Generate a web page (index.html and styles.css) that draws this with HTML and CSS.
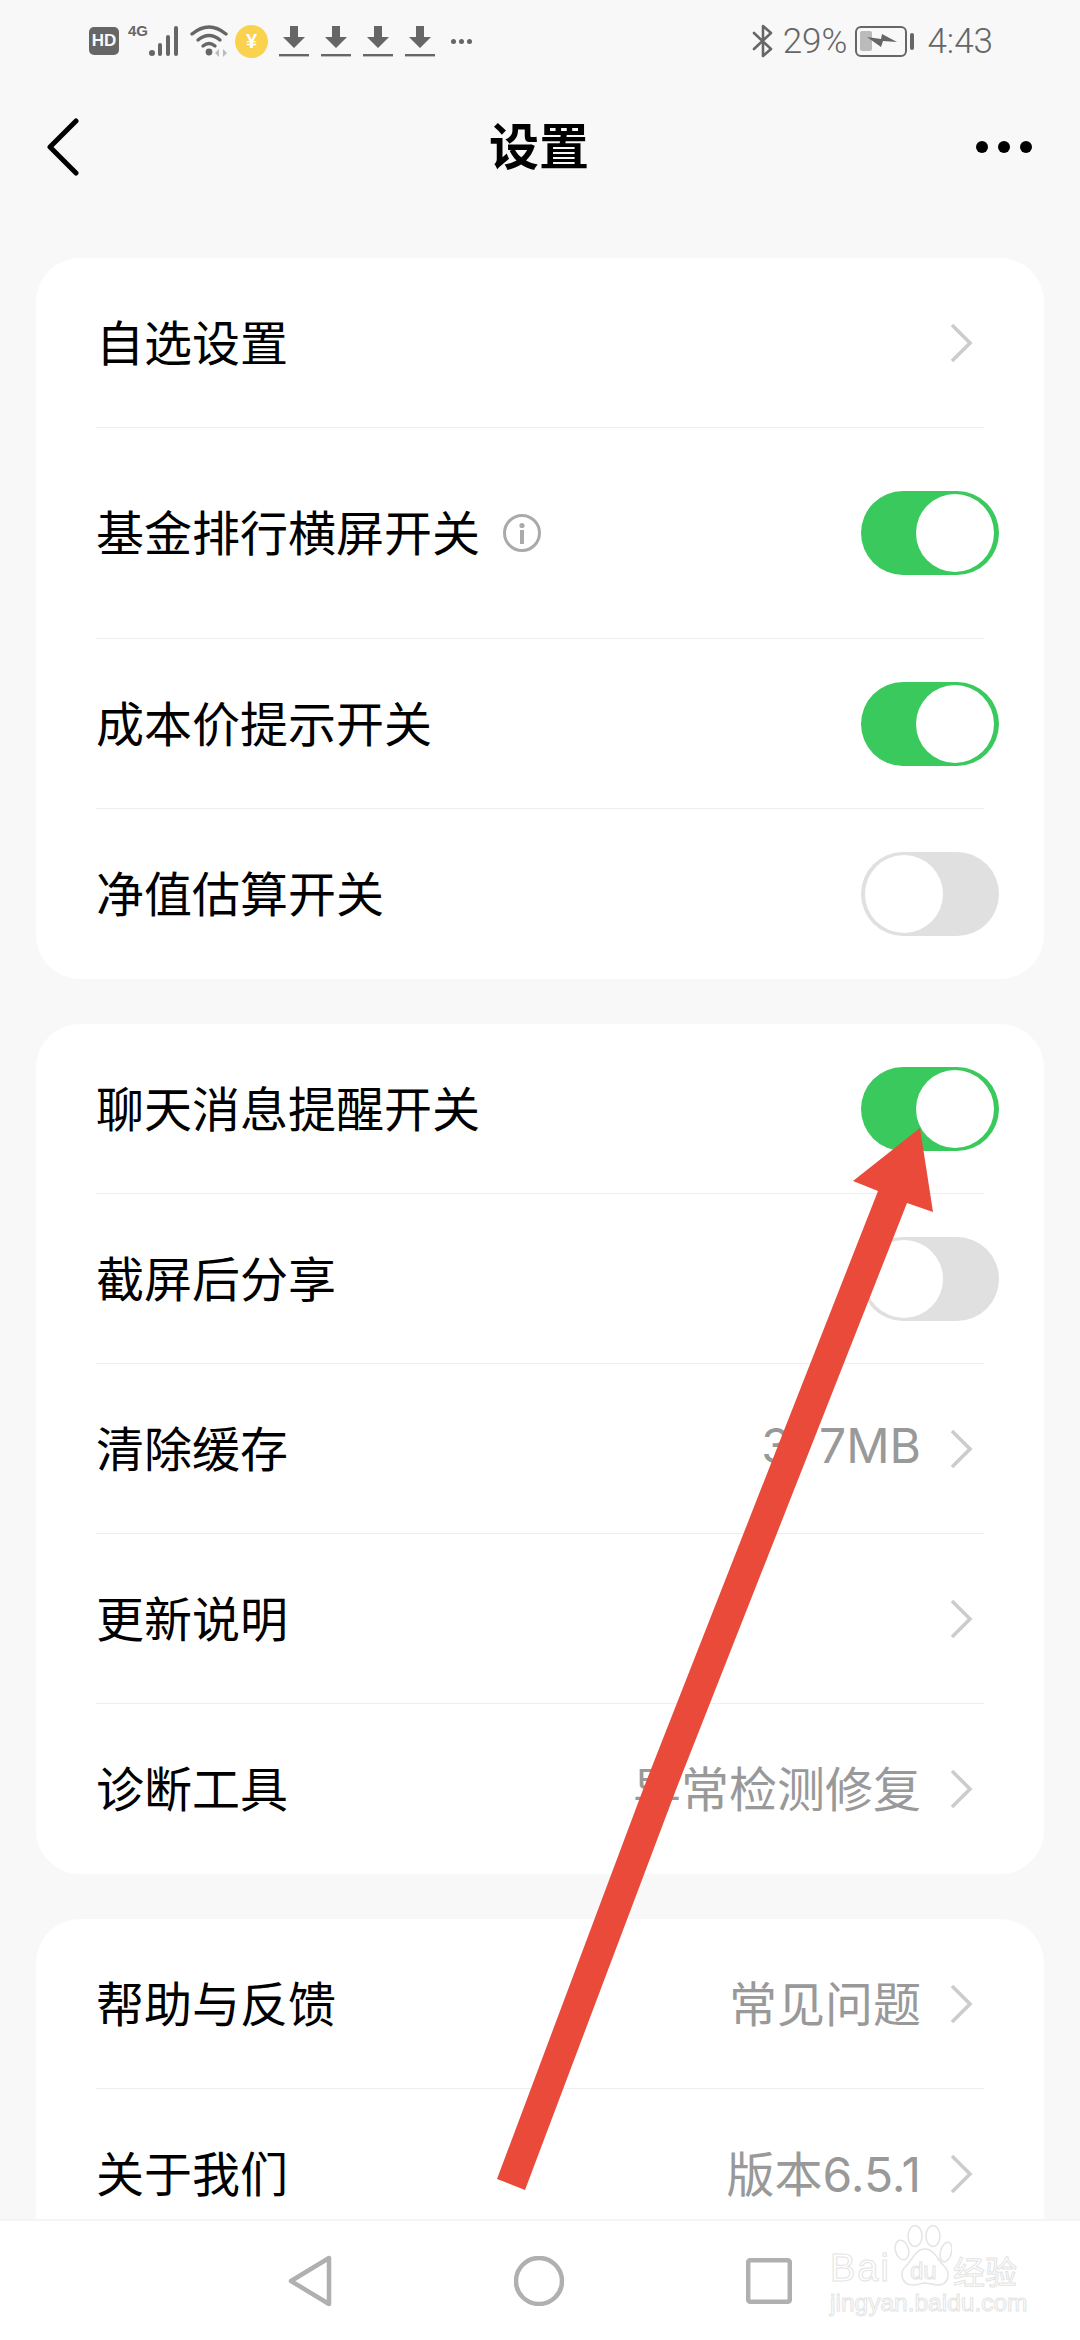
FILE: index.html
```html
<!DOCTYPE html>
<html lang="zh-CN">
<head>
    <meta charset="UTF-8">
    <meta name="viewport" content="width=device-width, initial-scale=1.0">
    <title>设置</title>
    <link rel="stylesheet" href="styles.css">
</head>
<body>
    <div id="phone">
        <div class="status">
            <div class="hd">HD</div>
            <div class="net">
                <span class="net-label">4G</span>
                <svg width="32" height="32" viewBox="0 0 32 32"><g fill="#666"><circle cx="4" cy="28" r="3"/><rect x="10" y="18" width="4" height="13" rx="2"/><rect x="18" y="10" width="4" height="21" rx="2"/><rect x="26" y="1" width="4" height="30" rx="2"/></g></svg>
            </div>
            <svg class="wifi" width="40" height="34" viewBox="0 0 40 34"><g fill="none" stroke="#666" stroke-width="3.4" stroke-linecap="round"><path d="M2 10 Q19 -4 36 10"/><path d="M8 16 Q19 7 30 16"/><path d="M13 22 Q19 17 25 22"/></g><circle cx="19" cy="28" r="3.4" fill="#666"/><path d="M29 25v8l-4-4zM33 25v8l4-4z" fill="#bbb"/></svg>
            <div class="coin">¥</div>
            <div class="downloads">
                <svg width="30" height="32" viewBox="0 0 30 32"><path d="M11 1h8v11h7L15 23 4 12h7z" fill="#666"/><rect y="29" width="30" height="2.4" fill="#666"/></svg>
                <svg width="30" height="32" viewBox="0 0 30 32"><path d="M11 1h8v11h7L15 23 4 12h7z" fill="#666"/><rect y="29" width="30" height="2.4" fill="#666"/></svg>
                <svg width="30" height="32" viewBox="0 0 30 32"><path d="M11 1h8v11h7L15 23 4 12h7z" fill="#666"/><rect y="29" width="30" height="2.4" fill="#666"/></svg>
                <svg width="30" height="32" viewBox="0 0 30 32"><path d="M11 1h8v11h7L15 23 4 12h7z" fill="#666"/><rect y="29" width="30" height="2.4" fill="#666"/></svg>
            </div>
            <div class="more-small"><i></i><i></i><i></i></div>
            <div class="status-right">
                <svg width="22" height="34" viewBox="0 0 22 34"><path d="M2 9l17 16-8 7V2l8 7L2 25" fill="none" stroke="#666" stroke-width="2.6" stroke-linejoin="round" stroke-linecap="round"/></svg>
                <span class="pct">29%</span>
                <div class="battery">
                    <div class="battery-fill"></div>
                    <svg class="bolt" width="30" height="14" viewBox="0 0 30 14"><path d="M0 3l14 2 1-5 15 8-14-1-2 6z" fill="#666"/></svg>
                </div>
                <div class="battery-nub"></div>
                <span class="clock">4:43</span>
            </div>
        </div>

        <div class="topbar">
            <svg class="back" width="34" height="58" viewBox="0 0 34 58"><path d="M30 3L4 29l26 26" fill="none" stroke="#000" stroke-width="5" stroke-linecap="round" stroke-linejoin="round"/></svg>
            <h1 class="title">设置</h1>
            <div class="more"><i></i><i></i><i></i></div>
        </div>

        <div class="content">
            <div class="card">
                <div class="row">
                    <span class="label">自选设置</span>
                    <svg class="chev" width="24" height="40" viewBox="0 0 24 40"><path d="M3 2l18 18L3 38" fill="none" stroke="#ccc" stroke-width="3.6"/></svg>
                </div>
                <div class="row row-tall">
                    <span class="label">基金排行横屏开关</span>
                    <svg class="info" width="40" height="40" viewBox="0 0 40 40"><circle cx="20" cy="20" r="17.5" fill="none" stroke="#aaa" stroke-width="3"/><circle cx="20" cy="12.5" r="2.6" fill="#aaa"/><rect x="18" y="17" width="4" height="14" fill="#aaa"/></svg>
                    <div class="toggle on"><div class="knob"></div></div>
                </div>
                <div class="row">
                    <span class="label">成本价提示开关</span>
                    <div class="toggle on"><div class="knob"></div></div>
                </div>
                <div class="row last">
                    <span class="label">净值估算开关</span>
                    <div class="toggle"><div class="knob"></div></div>
                </div>
            </div>

            <div class="card">
                <div class="row">
                    <span class="label">聊天消息提醒开关</span>
                    <div class="toggle on"><div class="knob"></div></div>
                </div>
                <div class="row">
                    <span class="label">截屏后分享</span>
                    <div class="toggle"><div class="knob"></div></div>
                </div>
                <div class="row">
                    <span class="label">清除缓存</span>
                    <span class="value">377MB</span>
                    <svg class="chev" width="24" height="40" viewBox="0 0 24 40"><path d="M3 2l18 18L3 38" fill="none" stroke="#ccc" stroke-width="3.6"/></svg>
                </div>
                <div class="row">
                    <span class="label">更新说明</span>
                    <svg class="chev" width="24" height="40" viewBox="0 0 24 40"><path d="M3 2l18 18L3 38" fill="none" stroke="#ccc" stroke-width="3.6"/></svg>
                </div>
                <div class="row last">
                    <span class="label">诊断工具</span>
                    <span class="value">异常检测修复</span>
                    <svg class="chev" width="24" height="40" viewBox="0 0 24 40"><path d="M3 2l18 18L3 38" fill="none" stroke="#ccc" stroke-width="3.6"/></svg>
                </div>
            </div>

            <div class="card">
                <div class="row">
                    <span class="label">帮助与反馈</span>
                    <span class="value">常见问题</span>
                    <svg class="chev" width="24" height="40" viewBox="0 0 24 40"><path d="M3 2l18 18L3 38" fill="none" stroke="#ccc" stroke-width="3.6"/></svg>
                </div>
                <div class="row last">
                    <span class="label">关于我们</span>
                    <span class="value">版本6.5.1</span>
                    <svg class="chev" width="24" height="40" viewBox="0 0 24 40"><path d="M3 2l18 18L3 38" fill="none" stroke="#ccc" stroke-width="3.6"/></svg>
                </div>
            </div>
        </div>

        <div class="navbar">
            <svg width="44" height="52" viewBox="0 0 44 52"><path d="M41 3v46L3 26z" fill="none" stroke="#b0b0b0" stroke-width="4.5" stroke-linejoin="round"/></svg>
            <svg width="50" height="50" viewBox="0 0 50 50"><circle cx="25" cy="25" r="23" fill="none" stroke="#b0b0b0" stroke-width="4.5"/></svg>
            <svg width="46" height="46" viewBox="0 0 46 46"><rect x="2.2" y="2.2" width="41.6" height="41.6" rx="2" fill="none" stroke="#b0b0b0" stroke-width="4.5"/></svg>
        </div>

        <!-- red annotation arrow, drawn over the page -->
        <svg class="arrow" width="1080" height="2340" viewBox="0 0 1080 2340">
            <path d="M920 1128L853 1181L878 1191L644 1787L497 2179L525 2190L677 1787L907 1203L933 1212Z" fill="#e94a3a"/>
        </svg>

        <div class="watermark">
            <div class="wm-top">
                <span class="wm-bai">Bai</span>
                <div class="wm-paw">
                    <svg width="58" height="62" viewBox="0 0 58 62"><g fill="#fff" stroke="#e4e4e4" stroke-width="1.5"><ellipse cx="8" cy="25" rx="6.5" ry="10" transform="rotate(-15 8 25)"/><ellipse cx="21" cy="11" rx="7" ry="10.5"/><ellipse cx="39" cy="11" rx="7" ry="10.5"/><ellipse cx="52" cy="27" rx="5.5" ry="10" transform="rotate(15 52 27)"/><path d="M31 24C21 24 18 36 12 41C5 47 7 60 19 60C25 60 27 58 31 58C35 58 38 60 44 60C55 60 57 47 50 41C44 36 41 24 31 24Z"/></g></svg>
                    <span class="wm-du">du</span>
                </div>
                <span class="wm-jy">经验</span>
            </div>
            <div class="wm-url">jingyan.baidu.com</div>
        </div>
    </div>
</body>
</html>
```

FILE: styles.css
```css
body {
    margin: 0;
    padding: 0;
    background-color: #f8f8f8;
    font-family: "Noto Sans CJK SC", sans-serif;
}

#phone {
    position: relative;
    width: 1080px;
    height: 2340px;
    display: flex;
    flex-direction: column;
    overflow: hidden;
}

/* status bar */
.status {
    height: 56px;
    padding: 26px 87px 0 89px;
    box-sizing: border-box;
    display: flex;
    align-items: center;
    flex-shrink: 0;
    color: #666;
}

.hd {
    width: 30px;
    height: 28px;
    border-radius: 5px;
    background-color: #666;
    color: #f8f8f8;
    font: bold 17px "Liberation Sans", sans-serif;
    text-align: center;
    line-height: 28px;
}

.net {
    display: flex;
    align-items: flex-end;
    margin-left: 9px;
    height: 32px;
}

.net-label {
    font: bold 15px "Liberation Sans", sans-serif;
    align-self: flex-start;
    margin-top: -3px;
}

.wifi {
    margin-left: 10px;
}

.coin {
    width: 33px;
    height: 33px;
    border-radius: 50%;
    background-color: #fbd24e;
    color: #fff;
    font: bold 20px "Liberation Sans", sans-serif;
    text-align: center;
    line-height: 33px;
    margin-left: 5px;
}

.downloads {
    display: flex;
    gap: 12px;
    margin-left: 11px;
}

.more-small {
    display: flex;
    gap: 3px;
    margin-left: 16px;
}

.more-small i {
    width: 5px;
    height: 5px;
    border-radius: 50%;
    background-color: #666;
}

.status-right {
    display: flex;
    align-items: center;
    margin-left: auto;
    font-family: Roboto, sans-serif;
    font-weight: 300;
    font-size: 35px;
}

.pct {
    margin-left: 9px;
}

.battery {
    position: relative;
    width: 52px;
    height: 31px;
    box-sizing: border-box;
    border: 2.5px solid #666;
    border-radius: 6px;
    margin-left: 8px;
}

.battery-fill {
    width: 12px;
    height: 20px;
    margin: 3px;
    border-radius: 2px;
    background-color: #bbb;
}

.bolt {
    position: absolute;
    left: 10px;
    top: 6px;
}

.battery-nub {
    width: 4px;
    height: 17px;
    border-radius: 2px;
    background-color: #666;
    margin-left: 3px;
}

.clock {
    margin-left: 13px;
}

/* title row */
.topbar {
    height: 182px;
    padding: 0 48px 0 46px;
    display: grid;
    grid-template-columns: 1fr auto 1fr;
    align-items: center;
    flex-shrink: 0;
}

.title {
    margin: 0;
    padding-bottom: 8px;
    font-size: 50px;
    font-weight: bold;
    color: #000;
}

.more {
    display: flex;
    gap: 10px;
    justify-content: flex-end;
}

.more i {
    width: 12px;
    height: 12px;
    border-radius: 50%;
    background-color: #000;
}

/* cards */
.content {
    flex: 1;
    min-height: 0;
    overflow: hidden;
    padding: 20px 36px 0;
}

.card {
    background-color: #fff;
    border-radius: 44px;
    padding: 0 60px;
    margin-bottom: 45px;
}

.row {
    height: 170px;
    box-sizing: border-box;
    display: flex;
    align-items: center;
    border-bottom: 1px solid #eee;
}

.row-tall {
    height: 211px;
}

.last {
    border-bottom: none;
}

.label {
    font-size: 48px;
    color: #000;
    margin-right: auto;
    padding-bottom: 6px;
}

.row-tall .label {
    margin-right: 22px;
}

.info {
    margin-right: auto;
}

.value {
    font-family: Inter, "Noto Sans CJK SC", sans-serif;
    font-size: 48px;
    color: #999;
    margin-right: 28px;
    padding-bottom: 6px;
}

.chev {
    margin-right: 11px;
}

.toggle {
    width: 138px;
    height: 84px;
    margin-right: -15px;
    padding: 3px 0 3px 4px;
    box-sizing: border-box;
    border-radius: 42px;
    background-color: #e0e0e0;
}

.knob {
    width: 78px;
    height: 78px;
    border-radius: 50%;
    background-color: #fff;
}

.on {
    background-color: #39c95c;
    padding-left: 55px;
}

/* bottom nav */
.navbar {
    height: 121px;
    padding-left: 288px;
    box-sizing: border-box;
    display: flex;
    align-items: center;
    gap: 182px;
    flex-shrink: 0;
    background-color: #fff;
    border-top: 2px solid #f5f5f5;
}

/* overlays */
.arrow {
    position: absolute;
    left: 0;
    top: 0;
}

.watermark {
    position: absolute;
    left: 830px;
    top: 2225px;
    width: 194px;
    color: #fff;
    font-family: "Liberation Sans", sans-serif;
    -webkit-text-stroke: 1px #e4e4e4;
}

.wm-top {
    display: flex;
    align-items: flex-end;
    height: 62px;
}

.wm-bai {
    width: 64px;
    font-size: 38px;
    line-height: 38px;
    letter-spacing: 2px;
}

.wm-paw {
    position: relative;
    width: 58px;
    height: 62px;
}

.wm-du {
    position: absolute;
    left: 16px;
    top: 33px;
    font-size: 24px;
    line-height: 26px;
}

.wm-jy {
    font-family: "Noto Sans CJK SC", sans-serif;
    font-size: 32px;
    line-height: 34px;
    margin-left: 1px;
}

.wm-url {
    font-size: 24.5px;
    line-height: 28px;
    margin-top: 2px;
    white-space: nowrap;
}
```
